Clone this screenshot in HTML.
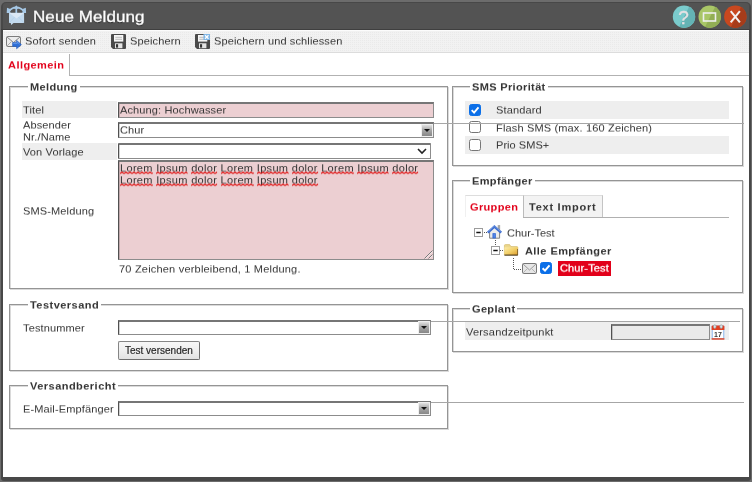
<!DOCTYPE html>
<html>
<head>
<meta charset="utf-8">
<title>Neue Meldung</title>
<style>
html,body{margin:0;padding:0;}
body{width:752px;height:482px;overflow:hidden;background:#6c6c6c;font-family:"Liberation Sans",sans-serif;font-size:11px;color:#333;position:relative;}
.abs{position:absolute;}
#win{position:absolute;left:0.7px;top:2px;width:750.4px;height:478.5px;background:#484848;border-radius:5px 5px 3px 3px;}
#tbar{position:absolute;left:2.5px;top:3.2px;width:746.3px;height:25.8px;background:#535353;border-radius:3px 3px 0 0;}
#tbl{position:absolute;left:1px;top:29px;width:749px;height:1px;background:#3f3f3f;}
#content{position:absolute;left:2.7px;top:30px;width:746.6px;height:447.2px;background:#fff;}
#title{position:absolute;left:33px;top:7px;color:#fff;font-size:17px;line-height:20px;letter-spacing:.08px;transform:scaleY(.93);transform-origin:0 15px;white-space:nowrap;text-shadow:0 1px 1px #222;-webkit-text-stroke:.35px #fff;}
#toolbar{position:absolute;left:3px;top:30px;width:746px;height:21px;background:#eaeaea;background-image:linear-gradient(#f2f2f2 1px,transparent 1px),linear-gradient(90deg,#f2f2f2 1px,transparent 1px);background-size:2px 2px;border-top:1px solid #fcfcfc;border-bottom:1px solid #dcdcdc;box-sizing:content-box;height:21px;}
.t{position:absolute;white-space:nowrap;font-size:11px;line-height:13px;color:#333;letter-spacing:.13px;transform:translateY(-.5px) scaleY(.9);transform-origin:0 10.3px;}
.t,.lg,#title,svg{will-change:transform;}
.b{font-weight:bold;letter-spacing:.35px;}
.red{color:#e2001a;}
.fs{position:absolute;border:1px solid #959595;box-sizing:border-box;box-shadow:inset 1px 1px 0 #dadada,1px 1px 0 #dadada;}
.lg{position:absolute;background:#fff;font-weight:bold;white-space:nowrap;font-size:11px;line-height:13px;color:#333;padding:0 2px;letter-spacing:.35px;transform:translateY(-.5px) scaleY(.9);transform-origin:0 10.3px;}
.rowbg{position:absolute;background:#eee;}
.inp{position:absolute;box-sizing:border-box;border:1px solid #8c8c8c;border-top:2px solid #767676;border-left:1px solid #505050;box-shadow:inset 1px 0 0 rgba(0,0,0,.18);background:#fff;}
.pink{background:#eccfd2;}
.dd{position:absolute;width:10px;height:11px;background:linear-gradient(#e2e2e2,#a8a8a8 45%,#878787);box-shadow:0 0 0 1px #f0f0f0;}
.dd:after{content:"";position:absolute;left:2px;top:4px;border-left:3px solid transparent;border-right:3px solid transparent;border-top:3.5px solid #111;}
.cb{position:absolute;width:13px;height:13px;box-sizing:border-box;border:1px solid #767676;border-radius:2.5px;background:#fff;}
.cb.on{background:#0b6fe8;border-color:#0b6fe8;}
.hl{position:absolute;height:1px;background:#a6a6a6;}
svg{position:absolute;overflow:visible;}
.w{position:relative;display:inline-block;}
.wv{position:absolute;left:0;top:9.7px;width:100%;height:3px;}
</style>
</head>
<body>
<div id="win"></div>
<div id="tbar"></div>
<div id="tbl"></div>
<div id="content"></div>
<div id="title">Neue Meldung</div>
<div id="toolbar"></div>

<!-- title icon -->
<svg style="left:0px;top:0px;" width="32" height="30" viewBox="0 0 32 30">
<path d="M9 11.2 Q11.6 7.5 16.3 7.3 Q21 7.5 23.8 11.2" fill="none" stroke="#a6c8e6" stroke-width="1.8"/>
<path d="M16.3 6.5 V13.5" stroke="#a6c8e6" stroke-width="1.7"/>
<path d="M13.8 8.8 L16.3 5.2 L18.8 8.8 Z" fill="#a6c8e6"/>
<path d="M6.7 13 L7 7.8 L11.6 9.6 L10 11 L10.6 13 Z" fill="#a6c8e6"/>
<path d="M26.1 13 L25.8 7.8 L21.2 9.6 L22.8 11 L22.2 13 Z" fill="#a6c8e6"/>
<path d="M9 13.4 Q9 12.7 9.7 12.7 H23.4 Q24.1 12.7 24.1 13.4 V22.2 Q24.1 22.9 23.4 22.9 H13.6 L11.1 25.1 L10.8 22.9 H9.7 Q9 22.9 9 22.2 Z" fill="#c3daee"/>
<path d="M9.3 12.9 L16.5 18.6 L23.8 12.9 Z" fill="#dbe8f5"/>
<path d="M9.3 22.6 L14.5 17.2 M23.8 22.6 L18.6 17.2" stroke="#b3cfe8" stroke-width=".8" fill="none"/>
</svg>

<!-- window buttons -->
<svg style="left:672px;top:5px;" width="76" height="24" viewBox="0 0 76 24">
<defs>
<clipPath id="c1"><circle cx="12" cy="11.7" r="11.2"/></clipPath>
<clipPath id="c2"><circle cx="37.7" cy="11.7" r="11.2"/></clipPath>
<clipPath id="c3"><circle cx="63.3" cy="11.7" r="11.2"/></clipPath>
</defs>
<circle cx="12" cy="11.7" r="11.2" fill="#7acbcc"/>
<path d="M18 0 L30 0 L30 24 L6 24 Z" fill="#64b3b5" clip-path="url(#c1)"/>
<circle cx="37.7" cy="11.7" r="11.2" fill="#a9c667"/>
<path d="M44 0 L56 0 L56 24 L32 24 Z" fill="#92ae55" clip-path="url(#c2)"/>
<circle cx="63.3" cy="11.7" r="11.2" fill="#c8481f"/>
<path d="M70 0 L82 0 L82 24 L58 24 Z" fill="#a63c1a" clip-path="url(#c3)"/>
<text x="11.6" y="18.6" font-family="Liberation Sans" font-size="19" fill="#e6e2e4" stroke="#e6e2e4" stroke-width=".35" text-anchor="middle">?</text>
<rect x="31.5" y="8" width="12" height="8" fill="none" stroke="#eee" stroke-width="1.6"/>
<path d="M58.7 6.2 L67.9 17.4 M67.9 6.2 L58.7 17.4" stroke="#f2f2f2" stroke-width="2" fill="none"/>
</svg>

<!-- toolbar icons -->
<svg style="left:6px;top:34px;" width="17" height="15" viewBox="0 0 17 15">
<rect x="0.5" y="2.5" width="14" height="10" rx="1.2" fill="#ececec" stroke="#7c7c7c" stroke-width="1"/>
<path d="M1 3 L7.5 8.5 L14 3" fill="none" stroke="#888" stroke-width="1"/>
<path d="M1 12 L5.5 7.5 M14 12 L9.5 7.5" fill="none" stroke="#aaa" stroke-width="1"/>
<path d="M6.6 8.6 H10.6 V6.4 L15.4 10.6 L10.6 14.8 V12.4 H6.6 Z" fill="#2f70d8" stroke="#2459b8" stroke-width=".6"/><path d="M7.2 9.4 H11.2 V8 L13.6 10.2" fill="none" stroke="#6fa0ea" stroke-width=".8"/>
</svg>
<svg style="left:111px;top:34px;" width="15" height="15" viewBox="0 0 15 15">
<path d="M1 0 H14 Q15 0 15 1 V14 Q15 15 14 15 H2 L0 13 V1 Q0 0 1 0 Z" fill="#4a4a4a"/>
<rect x="3" y="1" width="9.3" height="6.6" fill="#f6f6f6"/>
<path d="M4.3 3.3 H11 M4.3 5.3 H11" stroke="#b4b4b4" stroke-width=".9"/>
<rect x="4" y="9.3" width="7.4" height="4.9" fill="#e4e4e4"/>
<rect x="5" y="10.2" width="2.1" height="3.4" fill="#333"/>
</svg>
<svg style="left:195px;top:34px;" width="15" height="15" viewBox="0 0 15 15">
<path d="M1 0 H14 Q15 0 15 1 V14 Q15 15 14 15 H2 L0 13 V1 Q0 0 1 0 Z" fill="#4a4a4a"/>
<rect x="3" y="1" width="9.3" height="6.6" fill="#f6f6f6"/>
<path d="M4.3 3.3 H11 M4.3 5.3 H11" stroke="#b4b4b4" stroke-width=".9"/>
<rect x="4" y="9.3" width="7.4" height="4.9" fill="#e4e4e4"/>
<rect x="5" y="10.2" width="2.1" height="3.4" fill="#333"/>
<rect x="8.5" y="0" width="6.5" height="6" fill="#7fb6e6"/>
<path d="M10 1.3 L13.5 4.7 M13.5 1.3 L10 4.7" stroke="#fff" stroke-width="1.3"/>
</svg>

<!-- toolbar text -->
<div class="t" style="left:25px;top:35px;letter-spacing:.2px;">Sofort senden</div>
<div class="t" style="left:130px;top:35px;">Speichern</div>
<div class="t" style="left:214px;top:35px;">Speichern und schliessen</div>

<!-- tab -->
<div class="abs" style="left:69px;top:54px;width:1px;height:22px;background:#b2b2b2;"></div>
<div class="abs" style="left:69px;top:75px;width:680px;height:1px;background:#b2b2b2;"></div>
<div class="t b red" style="left:7.6px;top:59px;letter-spacing:.44px;">Allgemein</div>

<!-- Meldung fieldset -->
<div class="fs" style="left:9px;top:86px;width:439px;height:203px;"></div>
<div class="lg" style="left:27.5px;top:81px;">Meldung</div>
<div class="rowbg" style="left:22px;top:101px;width:95px;height:17px;"></div>
<div class="t" style="left:22.6px;top:104px;">Titel</div>
<div class="inp pink" style="left:118px;top:102px;width:316px;height:16px;"></div>
<div class="t" style="left:120px;top:104px;">Achung: Hochwasser</div>
<div class="t" style="left:22.6px;top:119px;">Absender</div>
<div class="t" style="left:22.6px;top:131px;">Nr./Name</div>
<div class="inp" style="left:118px;top:122px;width:316px;height:16px;"></div>
<div class="t" style="left:120px;top:124px;">Chur</div>
<div class="dd" style="left:422px;top:124.5px;"></div>
<div class="rowbg" style="left:22px;top:143px;width:95px;height:17px;"></div>
<div class="t" style="left:22.6px;top:146px;">Von Vorlage</div>
<div class="inp" style="left:118px;top:143px;width:313px;height:16px;border-radius:1px;"></div>
<svg style="left:417px;top:148px;" width="10" height="6" viewBox="0 0 10 6"><path d="M1 1 L5 5 L9 1" fill="none" stroke="#222" stroke-width="1.6"/></svg>
<div class="inp pink" style="left:118px;top:160px;width:316px;height:100px;"></div>
<svg width="0" height="0" style="left:0;top:0"><defs><pattern id="wvp" width="4" height="3" patternUnits="userSpaceOnUse"><path d="M0 2.3 L1 1.5 L2 0.7 L3 1.5 L4 2.3" stroke="#e00a0a" stroke-width="1.15" fill="none"/></pattern></defs></svg>
<div class="t sp" style="left:120px;top:162px;letter-spacing:.32px;"><span class="w">Lorem<svg class="wv" height="3"><rect width="100%" height="3" fill="url(#wvp)"/></svg></span> <span class="w">Ipsum<svg class="wv" height="3"><rect width="100%" height="3" fill="url(#wvp)"/></svg></span> <span class="w">dolor<svg class="wv" height="3"><rect width="100%" height="3" fill="url(#wvp)"/></svg></span> <span class="w">Lorem<svg class="wv" height="3"><rect width="100%" height="3" fill="url(#wvp)"/></svg></span> <span class="w">Ipsum<svg class="wv" height="3"><rect width="100%" height="3" fill="url(#wvp)"/></svg></span> <span class="w">dolor<svg class="wv" height="3"><rect width="100%" height="3" fill="url(#wvp)"/></svg></span> <span class="w">Lorem<svg class="wv" height="3"><rect width="100%" height="3" fill="url(#wvp)"/></svg></span> <span class="w">Ipsum<svg class="wv" height="3"><rect width="100%" height="3" fill="url(#wvp)"/></svg></span> <span class="w">dolor<svg class="wv" height="3"><rect width="100%" height="3" fill="url(#wvp)"/></svg></span></div>
<div class="t sp" style="left:120px;top:174px;letter-spacing:.32px;"><span class="w">Lorem<svg class="wv" height="3"><rect width="100%" height="3" fill="url(#wvp)"/></svg></span> <span class="w">Ipsum<svg class="wv" height="3"><rect width="100%" height="3" fill="url(#wvp)"/></svg></span> <span class="w">dolor<svg class="wv" height="3"><rect width="100%" height="3" fill="url(#wvp)"/></svg></span> <span class="w">Lorem<svg class="wv" height="3"><rect width="100%" height="3" fill="url(#wvp)"/></svg></span> <span class="w">Ipsum<svg class="wv" height="3"><rect width="100%" height="3" fill="url(#wvp)"/></svg></span> <span class="w">dolor<svg class="wv" height="3"><rect width="100%" height="3" fill="url(#wvp)"/></svg></span></div>
<svg style="left:424px;top:250px;" width="9" height="9" viewBox="0 0 9 9"><path d="M8.5 1.5 L1.5 8.5 M8.5 5.5 L5.5 8.5" stroke="#f4e8ea" stroke-width="1"/><path d="M8.5 0.5 L0.5 8.5 M8.5 4.5 L4.5 8.5" stroke="#7a7a7a" stroke-width="1"/></svg>
<div class="t" style="left:22.6px;top:205px;">SMS-Meldung</div>
<div class="t" style="left:118.8px;top:263px;letter-spacing:.2px;">70 Zeichen verbleibend, 1 Meldung.</div>

<!-- Testversand -->
<div class="fs" style="left:9px;top:304px;width:439px;height:67px;"></div>
<div class="lg" style="left:27.6px;top:299px;letter-spacing:.47px;">Testversand</div>
<div class="t" style="left:22.6px;top:322px;">Testnummer</div>
<div class="inp" style="left:118px;top:320px;width:313px;height:15px;"></div>
<div class="dd" style="left:419px;top:322px;"></div>
<div class="abs" style="left:118px;top:341px;width:82px;height:18.5px;box-sizing:border-box;border:1px solid #858585;border-right-color:#6e6e6e;border-bottom-color:#6e6e6e;border-radius:2px;background:linear-gradient(#f7f7f7,#efefef 50%,#e2e2e2);"></div>
<div class="t" style="left:125px;top:344px;color:#222;font-size:10px;letter-spacing:0;transform:none;-webkit-text-stroke:.2px #333;">Test versenden</div>

<!-- Versandbericht -->
<div class="fs" style="left:9px;top:385px;width:439px;height:44px;"></div>
<div class="lg" style="left:27.6px;top:380px;letter-spacing:.47px;">Versandbericht</div>
<div class="t" style="left:22.6px;top:403px;">E-Mail-Empfänger</div>
<div class="inp" style="left:118px;top:401px;width:313px;height:15px;"></div>
<div class="dd" style="left:419px;top:403px;"></div>

<!-- SMS Priorität -->
<div class="fs" style="left:452px;top:86px;width:291px;height:80px;"></div>
<div class="lg" style="left:470px;top:81px;">SMS Priorität</div>
<div class="rowbg" style="left:465px;top:101px;width:264px;height:17.6px;"></div>
<div class="rowbg" style="left:465px;top:136px;width:264px;height:17.8px;"></div>
<div class="cb on" style="left:468.5px;top:104.2px;width:12px;height:12px;"><svg style="left:-1px;top:-1px" width="12" height="12" viewBox="0 0 13 13"><path d="M2.9 6.7 L5.5 9.3 L10.3 3.7" fill="none" stroke="#fff" stroke-width="2"/></svg></div>
<div class="cb" style="left:468.5px;top:121.2px;width:12px;height:12px;"></div>
<div class="cb" style="left:468.5px;top:139px;width:12px;height:12px;"></div>
<div class="t" style="left:496.2px;top:104px;">Standard</div>
<div class="t" style="left:496.2px;top:122px;letter-spacing:.16px;">Flash SMS (max. 160 Zeichen)</div>
<div class="t" style="left:496.2px;top:139px;letter-spacing:.05px;">Prio SMS+</div>

<!-- Empfänger -->
<div class="fs" style="left:452px;top:180px;width:291px;height:113px;"></div>
<div class="lg" style="left:470px;top:175px;">Empfänger</div>
<div class="abs" style="left:465px;top:195px;width:59px;height:22px;border-top:1px solid #ddd;border-left:1px solid #f0f0f0;border-right:1px solid #bbb;box-sizing:border-box;"></div>
<div class="abs" style="left:524px;top:195px;width:79px;height:22px;background:#f3f3f3;border-top:1px solid #ddd;border-right:1px solid #c4c4c4;box-sizing:border-box;"></div>
<div class="abs" style="left:523px;top:217px;width:206px;height:1px;background:#b0b0b0;"></div>
<div class="t b red" style="left:470px;top:201px;">Gruppen</div>
<div class="t b" style="left:529px;top:201px;letter-spacing:.75px;">Text Import</div>
<div class="t" style="left:507px;top:227px;letter-spacing:0;">Chur-Test</div>
<div class="t b" style="left:524.5px;top:245px;letter-spacing:.43px;">Alle Empfänger</div>
<div class="abs" style="left:558px;top:261px;width:53px;height:15px;background:#e2001a;"></div>
<div class="t" style="left:560px;top:262px;color:#fff;-webkit-text-stroke:.3px #fff;">Chur-Test</div>
<div class="cb on" style="left:540px;top:262px;width:12px;height:12px;"><svg style="left:-1px;top:-1px" width="12" height="12" viewBox="0 0 12 12"><path d="M2.6 6.2 L5 8.6 L9.5 3.3" fill="none" stroke="#fff" stroke-width="2"/></svg></div>


<!-- tree -->
<svg style="left:470px;top:222px;" width="72" height="56" viewBox="470 222 72 56">
<g stroke="#555" stroke-width="1" stroke-dasharray="1 1" fill="none">
<path d="M484 232.5 H487"/>
<path d="M495.5 240 V246"/>
<path d="M500 250.5 H504"/>
<path d="M513.5 258 V269.5 H522"/>
</g>
<rect x="474.5" y="228.5" width="8" height="8" fill="#fff" stroke="#9c9c9c"/>
<path d="M476.3 232.5 H480.7" stroke="#111" stroke-width="1.5"/>
<rect x="491.5" y="246.5" width="8" height="8" fill="#fff" stroke="#9c9c9c"/>
<path d="M493.3 250.5 H497.7" stroke="#111" stroke-width="1.5"/>
<!-- house -->
<rect x="498" y="225.6" width="1.9" height="4.5" fill="#b0b0b0" stroke="#888" stroke-width=".4"/>
<path d="M489.6 231.5 L494.4 227 L499.6 231.5 V238.2 H489.6 Z" fill="#ececec" stroke="#777" stroke-width=".9"/>
<path d="M487.8 232.6 L494.4 226.6 L501.2 232.6" fill="none" stroke="#3f6fd0" stroke-width="2.5" stroke-linejoin="miter"/>
<path d="M488.4 231.4 L494.4 225.9 L500.6 231.4" fill="none" stroke="#7da2e6" stroke-width=".8"/>
<rect x="492.5" y="233.2" width="3.3" height="5.2" fill="#2a63d4"/>
<rect x="493.6" y="234" width="1" height="3.6" fill="#6f9cf0"/>
<!-- folder -->
<defs><linearGradient id="fg" x1="0" y1="0" x2="1" y2="1"><stop offset="0" stop-color="#fcecaa"/><stop offset=".5" stop-color="#f2cf68"/><stop offset="1" stop-color="#dd9c2c"/></linearGradient></defs>
<path d="M504.4 245.6 Q504.4 244.6 505.4 244.6 H509.6 L511 246.6 H517 Q517.8 246.6 517.8 247.4 V255 H504.4 Z" fill="#ecd78c" stroke="#c8a850" stroke-width=".5"/>
<rect x="504.4" y="247.4" width="13.4" height="7.6" fill="url(#fg)"/>
<rect x="504.4" y="254.6" width="13.4" height="1" fill="#3a2c12"/>
<rect x="517.2" y="249" width=".7" height="6" fill="#6a5020"/>
<!-- envelope -->
<rect x="522.5" y="263.5" width="14" height="10" rx="1" fill="#e6e6e6" stroke="#777" stroke-width="1"/>
<path d="M523 264 L529.5 270 L536 264" fill="none" stroke="#999" stroke-width="1"/>
<path d="M523 273 L527.5 268.5 M536 273 L531.5 268.5" fill="none" stroke="#b5b5b5" stroke-width="1"/>
</svg>

<!-- Geplant -->
<div class="fs" style="left:452px;top:308px;width:291px;height:44px;"></div>
<div class="lg" style="left:470px;top:303px;">Geplant</div>
<div class="rowbg" style="left:465px;top:322px;width:264px;height:18px;"></div>
<div class="t" style="left:465.6px;top:326px;letter-spacing:.2px;">Versandzeitpunkt</div>
<div class="inp" style="left:611px;top:324px;width:99px;height:16px;background:#eaeaea;"></div>


<svg style="left:711px;top:324px;" width="14" height="16" viewBox="0 0 14 16">
<rect x="0.6" y="1.6" width="12.8" height="14" rx="1" fill="#a9c9f0"/>
<rect x="2" y="5.5" width="10" height="8.6" fill="#fff"/>
<path d="M0.6 6 V2.8 Q0.6 1.6 1.8 1.6 H12.2 Q13.4 1.6 13.4 2.8 V6 Z" fill="#e33f22"/>
<rect x="0.6" y="14.2" width="12.8" height="1.5" fill="#e0492c"/>
<ellipse cx="3.8" cy="2.6" rx="1.3" ry="1.9" fill="#d8e4e8" stroke="#8a9aa0" stroke-width=".6"/>
<ellipse cx="10.2" cy="2.6" rx="1.3" ry="1.9" fill="#d8e4e8" stroke="#8a9aa0" stroke-width=".6"/>
<text x="7" y="13" font-family="Liberation Sans" font-size="7" font-weight="bold" fill="#3a3a3a" text-anchor="middle">17</text>
</svg>

<!-- stray lines -->
<div class="hl" style="left:434px;top:123px;width:310px;"></div>
<div class="hl" style="left:431px;top:321px;width:309px;"></div>
<div class="hl" style="left:431px;top:402px;width:313px;"></div>
</body>
</html>
